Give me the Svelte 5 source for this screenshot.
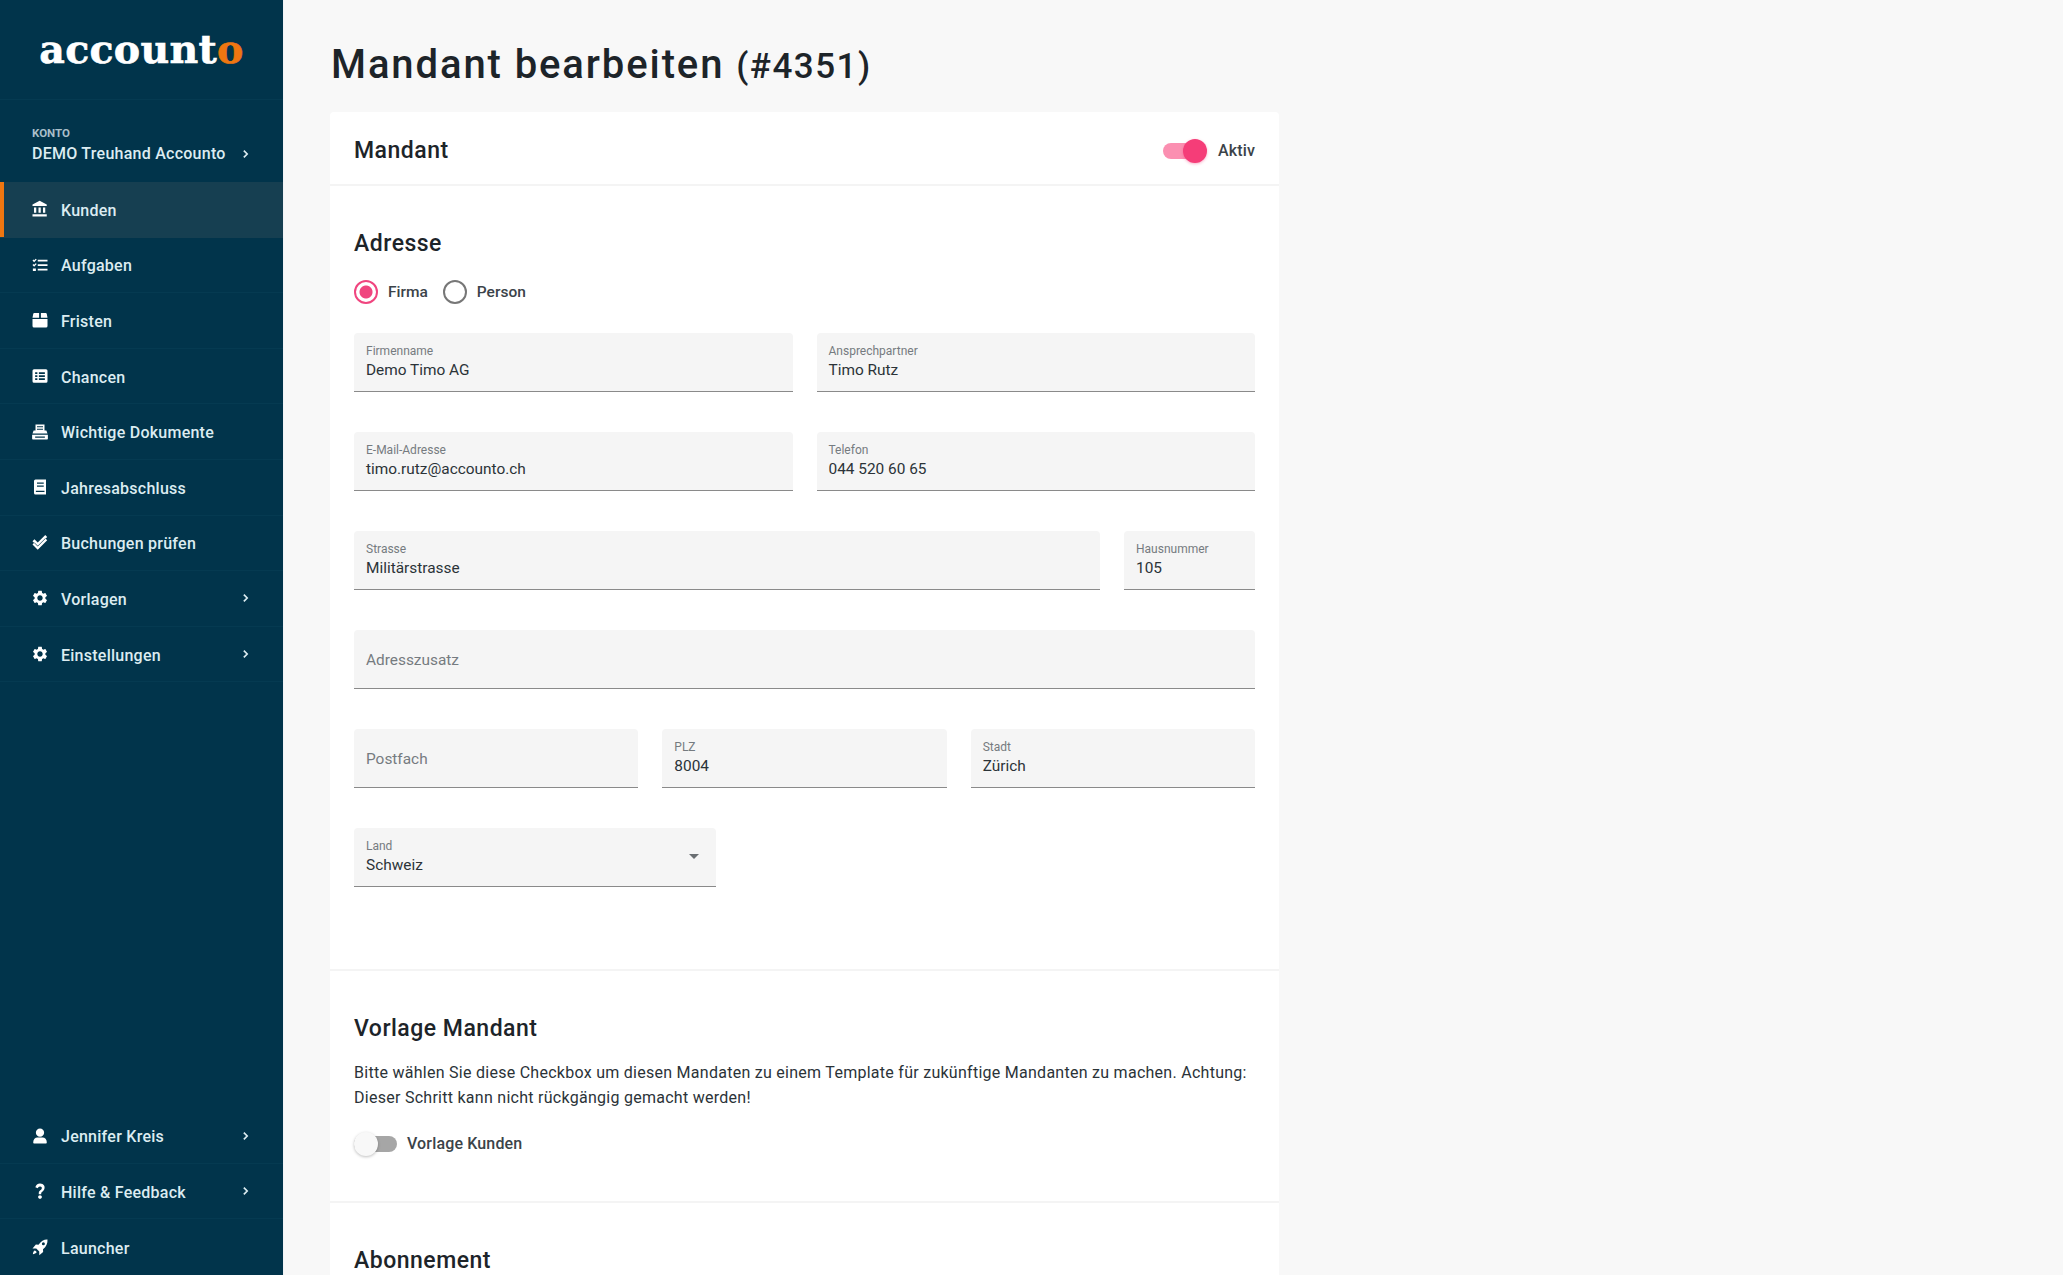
<script>
  const gear = "M19.14 12.94c.04-.3.06-.61.06-.94 0-.32-.02-.64-.07-.94l2.03-1.58c.18-.14.23-.41.12-.61l-1.92-3.32c-.12-.22-.37-.29-.59-.22l-2.39.96c-.5-.38-1.03-.7-1.62-.94L14.4 2.81c-.04-.24-.24-.41-.48-.41h-3.84c-.24 0-.43.17-.47.41L9.25 5.35c-.59.24-1.13.57-1.62.94l-2.39-.96c-.22-.08-.47 0-.59.22L2.74 8.87c-.12.21-.08.47.12.61l2.03 1.58c-.05.3-.09.63-.09.94s.02.64.07.94l-2.03 1.58c-.18.14-.23.41-.12.61l1.92 3.32c.12.22.37.29.59.22l2.39-.96c.5.38 1.03.7 1.62.94l.36 2.54c.05.24.24.41.48.41h3.84c.24 0 .44-.17.47-.41l.36-2.54c.59-.24 1.13-.56 1.62-.94l2.39.96c.22.08.47 0 .59-.22l1.92-3.32c.12-.22.07-.47-.12-.61l-2.01-1.58zM12 15.6c-1.98 0-3.6-1.62-3.6-3.6s1.62-3.6 3.6-3.6 3.6 1.62 3.6 3.6-1.62 3.6-3.6 3.6z";

  const icons = {
    bank: "M4 10v7h3v-7H4zm6 0v7h3v-7h-3zM2 22h19v-3H2v3zm14-12v7h3v-7h-3zm-4.5-9L2 6v2h19V6l-9.5-5z",
    tasks: "M9 5h13v2.4H9zM9 11h13v2.4H9zM9 17h13v2.4H9zM2 6l1.2-1.2 1 1L6.4 3.6l1.2 1.2L4.2 8.2zM2 12l1.2-1.2 1 1 2.2-2.2 1.2 1.2-3.4 3.4zM2.5 16.5h4v3.5h-4z",
    box: "M2 10.5h20V20a2 2 0 0 1-2 2H4a2 2 0 0 1-2-2zM3 3.5A1.5 1.5 0 0 1 4.4 2.5h6.4v6.6H2zM13.2 2.5h6.4A1.5 1.5 0 0 1 21 3.5l1 5.6h-8.8z",
    list: "M2 5a2 2 0 0 1 2-2h16a2 2 0 0 1 2 2v14a2 2 0 0 1-2 2H4a2 2 0 0 1-2-2zm3.5 2v2.4h3V7zm5 0v2.4h8V7zm-5 4v2.4h3V11zm5 0v2.4h8V11zm-5 4v2.4h3V15zm5 0v2.4h8V15z",
    inbox: "M6 2h12v8h2.5l1.5 4H2l1.5-4H6zm2 2.4v1.4h8V4.400zm0 3.200V9h8V7.600zM1.500 15.500h21V21a1 1 0 0 1-1 1h-19a1 1 0 0 1-1-1zm4 2.500v1.500h13V18z",
    book: "M4 4a2 2 0 0 1 2-2h14v20H6a2 2 0 0 1-2-2zm4 2v1.800h9V6zm0 4v1.800h9V10zm-1.500 7v1.800H18V17z",
    checks: "M2 9.500l2.600-2.600 4.400 4.400L19 1.300l2.600 2.600L9 16.500zM2 14l2.600-2.600 4.400 4.400 10-10 2.600 2.600L9 21z",
    gear,
    user: "M12 2a5.500 5.500 0 1 1 0 11 5.500 5.500 0 0 1 0-11zM3 20c0-3.500 2.500-6 5.500-6h7c3 0 5.500 2.500 5.500 6v1a1 1 0 0 1-1 1H4a1 1 0 0 1-1-1z",
    help: "M10.600 13c.9-1.700 2.800-2.600 3.500-3.800.8-1.300.3-3.300-2.100-3.300-1.700 0-2.500 1.200-2.900 2.400L5.800 7C6.600 4.300 8.800 2 12 2c2.600 0 4.500 1.200 5.400 2.700.8 1.300 1.200 3.700 0 5.500-1.300 2-2.700 2.600-3.400 3.800-.3.500-.4.900-.4 2.400h-3.200c0-.9-.2-2.200.200-3.400zM14.500 20c0 1.300-1.100 2.400-2.500 2.400S9.500 21.300 9.500 20s1.100-2.400 2.500-2.400 2.500 1.100 2.500 2.400z",
    rocket: "M22 2c.3 5-1.500 9.500-6 13l.2 3.500L11 23v-5l-4-4H2l4.500-5.200 3.500.2C13.500 4 17.500 1.700 22 2zm-5.500 3.500a2 2 0 1 0 0 4 2 2 0 0 0 0-4zM5 16.500c1 0 2.500 1.500 2.500 2.500C7 20.500 4 21.500 2.500 21.500c0-1.500 1-4.500 2.500-5z"
  };

  const mainNav = [
    { label: "Kunden", icon: "bank", active: true },
    { label: "Aufgaben", icon: "tasks" },
    { label: "Fristen", icon: "box" },
    { label: "Chancen", icon: "list" },
    { label: "Wichtige Dokumente", icon: "inbox" },
    { label: "Jahresabschluss", icon: "book" },
    { label: "Buchungen prüfen", icon: "checks" },
    { label: "Vorlagen", icon: "gear", more: true },
    { label: "Einstellungen", icon: "gear", more: true }
  ];

  const bottomNav = [
    { label: "Jennifer Kreis", icon: "user", more: true },
    { label: "Hilfe & Feedback", icon: "help", more: true },
    { label: "Launcher", icon: "rocket" }
  ];
</script>

{#snippet chevron()}
  <svg class="chevron" viewBox="0 0 8 12" aria-hidden="true">
    <path d="M2 2l4 4-4 4" fill="none" stroke="currentColor" stroke-width="2" />
  </svg>
{/snippet}

{#snippet navItem(item)}
  <a class="nav-item" class:active={item.active} href="#top">
    <svg class="nav-icon" viewBox="0 0 24 24" aria-hidden="true"><path d={icons[item.icon]} fill-rule="evenodd" /></svg>
    <span class="nav-label">{item.label}</span>
    {#if item.more}{@render chevron()}{/if}
  </a>
{/snippet}

{#snippet field(label, value, cls = "")}
  <div class="field {cls}">
    {#if value}
      <span class="field-label">{label}</span>
      <span class="field-value">{value}</span>
    {:else}
      <span class="field-placeholder">{label}</span>
    {/if}
  </div>
{/snippet}

<div class="layout">
  <aside class="sidebar">
    <div class="logo">account<span class="logo-o">o</span></div>

    <div class="account">
      <div class="account-label">KONTO</div>
      <div class="account-name"><span>DEMO Treuhand Accounto</span>{@render chevron()}</div>
    </div>

    <nav>
      {#each mainNav as item}
        {@render navItem(item)}
      {/each}
    </nav>

    <nav class="nav-bottom">
      {#each bottomNav as item}
        {@render navItem(item)}
      {/each}
    </nav>
  </aside>

  <main class="content">
    <h1>Mandant bearbeiten <small>(#4351)</small></h1>

    <section class="card">
      <header class="card-head">
        <h2>Mandant</h2>
        <div class="switch-row">
          <span class="switch on"><span class="knob"></span></span>
          <span class="switch-text">Aktiv</span>
        </div>
      </header>

      <div class="block address">
        <h3>Adresse</h3>
        <div class="radios">
          <span class="radio checked"></span><span class="radio-text">Firma</span>
          <span class="radio"></span><span class="radio-text">Person</span>
        </div>

        <div class="row two">
          {@render field("Firmenname", "Demo Timo AG")}
          {@render field("Ansprechpartner", "Timo Rutz")}
        </div>
        <div class="row two">
          {@render field("E-Mail-Adresse", "timo.rutz@accounto.ch")}
          {@render field("Telefon", "044 520 60 65")}
        </div>
        <div class="row street">
          {@render field("Strasse", "Militärstrasse")}
          {@render field("Hausnummer", "105")}
        </div>
        <div class="row">
          {@render field("Adresszusatz", "")}
        </div>
        <div class="row three">
          {@render field("Postfach", "")}
          {@render field("PLZ", "8004")}
          {@render field("Stadt", "Zürich")}
        </div>
        <div class="row">
          <div class="select">
            {@render field("Land", "Schweiz")}
            <span class="caret"></span>
          </div>
        </div>
      </div>

      <div class="block template">
        <h3>Vorlage Mandant</h3>
        <p>Bitte wählen Sie diese Checkbox um diesen Mandaten zu einem Template für zukünftige Mandanten zu machen. Achtung: Dieser Schritt kann nicht rückgängig gemacht werden!</p>
        <div class="switch-row">
          <span class="switch"><span class="knob"></span></span>
          <span class="switch-text">Vorlage Kunden</span>
        </div>
      </div>

      <div class="block subscription">
        <h3>Abonnement</h3>
      </div>
    </section>
  </main>
</div>

<style>
  :global(body) {
    margin: 0;
    background: #f8f8f8;
    font-family: Roboto, "Noto Sans", sans-serif;
    overflow: hidden;
  }

  .layout {
    display: flex;
    height: 1275px;
    overflow: hidden;
  }

  .sidebar {
    width: 283px;
    flex: none;
    display: flex;
    flex-direction: column;
    background: #01344b;
    color: #dcecf1;
  }

  .logo {
    height: 100px;
    box-sizing: border-box;
    padding-top: 24px;
    text-align: center;
    font-family: "DejaVu Serif", serif;
    font-weight: 700;
    font-size: 39.5px;
    line-height: 50px;
    letter-spacing: 0.3px;
    color: #fff;
    -webkit-text-stroke: 0.6px currentColor;
    border-bottom: 1px solid #053a51;
  }

  .logo-o {
    color: #ee7611;
  }

  .account {
    height: 82px;
    box-sizing: border-box;
    padding: 26px 34px 0 32px;
  }

  .account-label {
    font-size: 11.5px;
    font-weight: 700;
    line-height: 14px;
    color: #a9bfc9;
  }

  .account-name {
    display: flex;
    justify-content: space-between;
    align-items: center;
    padding-top: 2px;
    font-size: 16px;
    font-weight: 500;
    line-height: 24px;
    letter-spacing: 0.25px;
  }

  .nav-item {
    height: 55.6px;
    box-sizing: border-box;
    display: flex;
    align-items: center;
    padding: 0 34px 0 31px;
    color: inherit;
    text-decoration: none;
    border-bottom: 1px solid #053a51;
  }

  .nav-item.active {
    background: #163f51;
    box-shadow: inset 4px 0 0 #ee7611;
    border-bottom-color: #163f51;
  }

  .nav-icon {
    width: 18px;
    height: 18px;
    flex: none;
    fill: #fff;
    margin-right: 12px;
  }

  .nav-label {
    flex: 1;
    padding-top: 2px;
    font-size: 16px;
    font-weight: 500;
    letter-spacing: 0.25px;
  }

  .chevron {
    width: 7px;
    height: 10px;
    flex: none;
    color: #dcecf1;
  }

  .nav-bottom {
    margin-top: auto;
  }

  .nav-bottom .nav-item:last-child {
    border-bottom: 0;
  }

  .content {
    flex: 1;
    padding: 0 46px;
    color: #1d2429;
    border-left: 1px solid #f1f3f6;
  }

  h1 {
    margin: 0;
    height: 112px;
    box-sizing: border-box;
    padding: 41px 0 0 1px;
    font-size: 40px;
    line-height: 48px;
    font-weight: 500;
    letter-spacing: 1.9px;
  }

  h1 small {
    font-size: 35px;
    font-weight: 500;
    letter-spacing: 1.5px;
  }

  .card {
    width: 949px;
    background: #fff;
    border-radius: 4px 4px 0 0;
  }

  .card-head {
    height: 74px;
    box-sizing: border-box;
    display: flex;
    justify-content: space-between;
    align-items: center;
    padding: 5px 24px 0;
    border-bottom: 2px solid #f4f4f4;
  }

  h2, h3 {
    margin: 0;
    font-weight: 500;
    font-size: 23px;
    line-height: 30px;
    letter-spacing: 0.5px;
  }

  .block {
    padding: 0 24px;
    border-bottom: 2px solid #f4f4f4;
  }

  .address {
    height: 785px;
    box-sizing: border-box;
    padding-top: 43px;
  }

  .radios {
    display: flex;
    align-items: center;
    margin-top: 21px;
    height: 24px;
    font-size: 15.5px;
    color: #3b4349;
  }

  .radio {
    width: 24px;
    height: 24px;
    box-sizing: border-box;
    border: 2px solid #777;
    border-radius: 50%;
    margin-right: 10px;
  }

  .radio.checked {
    border-color: #f0457f;
    background: radial-gradient(circle, #f0457f 0 6px, #fff 7px);
  }

  .radio-text {
    margin-right: 15px;
    font-weight: 500;
  }

  .row {
    display: grid;
    gap: 24px;
    margin-bottom: 40px;
  }

  .radios + .row {
    margin-top: 29px;
  }

  .two {
    grid-template-columns: 1fr 1fr;
  }

  .street {
    grid-template-columns: 1fr 131px;
  }

  .three {
    grid-template-columns: 1fr 1fr 1fr;
  }

  .field {
    height: 59px;
    box-sizing: border-box;
    padding: 10px 12px 0;
    background: #f5f5f5;
    border-bottom: 1px solid #8a8a8a;
    border-radius: 4px 4px 0 0;
  }

  .field-label {
    display: block;
    font-size: 12px;
    line-height: 16px;
    color: #757b80;
  }

  .field-value {
    display: block;
    font-size: 15.4px;
    line-height: 22px;
    color: #2b3338;
  }

  .field-placeholder {
    display: block;
    padding-top: 9px;
    font-size: 15.4px;
    line-height: 22px;
    color: #757b80;
  }

  .select {
    position: relative;
    width: 362px;
  }

  .caret {
    position: absolute;
    right: 17px;
    top: 26px;
    border: 5px solid transparent;
    border-top-color: #6a6e72;
    border-bottom: 0;
  }

  .template {
    height: 232px;
    box-sizing: border-box;
    padding-top: 43px;
  }

  p {
    margin: 16px 0 0;
    font-size: 16px;
    line-height: 25px;
    color: #2b3338;
    font-weight: 400;
    letter-spacing: 0.27px;
  }

  .template .switch-row {
    margin-top: 24px;
  }

  .subscription {
    padding-top: 43px;
    border: 0;
  }

  .switch-row {
    display: flex;
    align-items: center;
  }

  .switch {
    position: relative;
    width: 43px;
    height: 16px;
    border-radius: 8px;
    background: #a6a6a6;
    margin-right: 10px;
  }

  .switch.on {
    width: 38px;
    background: #fb8fb1;
    margin-right: 16.5px;
  }

  .knob {
    position: absolute;
    top: -4px;
    left: 0;
    width: 24px;
    height: 24px;
    border-radius: 50%;
    background: #f8f8f8;
    box-shadow: 0 1px 3px rgba(0, 0, 0, 0.25);
  }

  .on .knob {
    left: auto;
    right: -6px;
    background: #f53d78;
    box-shadow: 0 1px 3px rgba(240, 60, 120, 0.4);
  }

  .switch-text {
    font-size: 16px;
    font-weight: 500;
    color: #3b4349;
    letter-spacing: 0.15px;
  }
</style>
